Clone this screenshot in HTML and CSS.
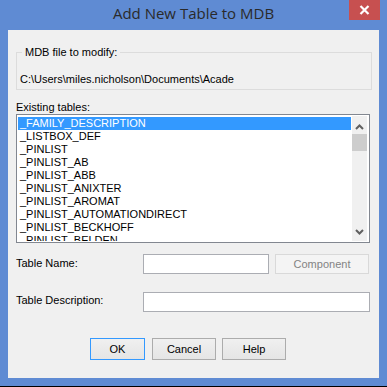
FILE: index.html
```html
<!DOCTYPE html>
<html>
<head>
<meta charset="utf-8">
<link rel="stylesheet" href="styles.css">
</head>
<body>
<div class="window">
  <div class="titlebar">
    <div class="title">Add New Table to MDB</div>
    <div class="close">
      <svg width="31" height="20" viewBox="0 0 31 20"><path d="M11.5 6 L19.5 14 M19.5 6 L11.5 14" stroke="#fff" stroke-width="2.2"/></svg>
    </div>
  </div>
  <div class="client">
    <div class="group">
      <div class="legend">MDB file to modify:</div>
      <div class="path">C:\Users\miles.nicholson\Documents\Acade</div>
    </div>
    <div class="label-top">Existing tables:</div>
    <div class="listbox">
      <div class="items">
        <div class="item selected">_FAMILY_DESCRIPTION</div>
        <div class="item">_LISTBOX_DEF</div>
        <div class="item">_PINLIST</div>
        <div class="item">_PINLIST_AB</div>
        <div class="item">_PINLIST_ABB</div>
        <div class="item">_PINLIST_ANIXTER</div>
        <div class="item">_PINLIST_AROMAT</div>
        <div class="item">_PINLIST_AUTOMATIONDIRECT</div>
        <div class="item">_PINLIST_BECKHOFF</div>
        <div class="item">_PINLIST_BELDEN</div>
      </div>
      <div class="scrollbar">
        <div class="arrow">
          <svg width="15" height="18" viewBox="0 0 15 18"><path d="M4 13 L7.5 9.5 L11 13" fill="none" stroke="#606060" stroke-width="2"/></svg>
        </div>
        <div class="thumb"></div>
        <div class="track"></div>
        <div class="arrow">
          <svg width="15" height="17" viewBox="0 0 15 17"><path d="M4 6 L7.5 9.5 L11 6" fill="none" stroke="#606060" stroke-width="2"/></svg>
        </div>
      </div>
    </div>
    <div class="row row-name">
      <div class="row-label label-name">Table Name:</div>
      <div class="input input-name"></div>
      <div class="btn btn-disabled">Component</div>
    </div>
    <div class="row row-desc">
      <div class="row-label label-desc">Table Description:</div>
      <div class="input input-desc"></div>
    </div>
    <div class="buttons">
      <div class="btn btn-ok">OK</div>
      <div class="btn btn-cancel">Cancel</div>
      <div class="btn btn-help">Help</div>
    </div>
  </div>
</div>
</body>
</html>
```
FILE: styles.css
```css
html, body {
  margin: 0;
  padding: 0;
  background: #000;
}
.window {
  width: 387px;
  height: 386px;
  background: #5f8bd3;
  box-sizing: border-box;
  overflow: hidden;
}
.titlebar {
  height: 30px;
  display: grid;
  grid-template-columns: 1fr auto 1fr;
}
.title {
  grid-column: 2;
  padding-top: 3px;
  font-family: "Open Sans", "Noto Sans", sans-serif;
  font-size: 15px;
  line-height: 20px;
  color: #2a2a2a;
  white-space: nowrap;
}
.close {
  grid-column: 3;
  justify-self: end;
  align-self: start;
  width: 31px;
  height: 20px;
  margin-right: 7px;
  background: #c75050;
}
.close svg { display: block; }
.client {
  margin: 0 8px;
  height: 348px;
  background: #f0f0f0;
  padding: 0 0 0 8px;
  box-sizing: border-box;
  font-family: "Liberation Sans", Arial, sans-serif;
  font-size: 11px;
  line-height: 13px;
  color: #000;
  overflow: hidden;
}
.group {
  margin-top: 22px;
  width: 356px;
  height: 38px;
  border: 1px solid #dcdcdc;
  box-sizing: border-box;
}
.legend {
  display: inline-block;
  margin-top: -7px;
  margin-left: 5px;
  padding: 0 3px;
  background: #f0f0f0;
  vertical-align: top;
}
.path {
  margin-top: 7px;
  padding-left: 3px;
  white-space: nowrap;
}
.label-top {
  margin-top: 11px;
}
.listbox {
  width: 354px;
  height: 129px;
  border: 1px solid #828790;
  box-sizing: border-box;
  background: #fff;
  display: flex;
  padding: 1px 2px 1px 1px;
}
.items {
  width: 333px;
  padding-top: 1px;
  overflow: hidden;
}
.item {
  height: 13px;
  padding-left: 2px;
  white-space: nowrap;
}
.item.selected {
  background: #3399ff;
  color: #fff;
}
.scrollbar {
  width: 15px;
  margin-left: 1px;
  background: #f0f0f0;
  display: flex;
  flex-direction: column;
}
.arrow svg { display: block; }
.thumb {
  height: 17px;
  background: #cdcdcd;
}
.track { flex: 1; }
.row {
  display: flex;
  align-items: flex-start;
}
.row-name { margin-top: 11px; }
.row-desc { margin-top: 18px; }
.row-label {
  width: 127px;
  white-space: nowrap;
}
.label-name { padding-top: 3px; }
.label-desc { padding-top: 2px; }
.input {
  height: 20px;
  box-sizing: border-box;
  border: 1px solid #abadb3;
  background: #fff;
}
.input-name { width: 126px; }
.input-desc { width: 227px; }
.btn {
  box-sizing: border-box;
  border: 1px solid #acacac;
  background: linear-gradient(#f0f0f0, #e5e5e5);
  display: flex;
  align-items: center;
  justify-content: center;
  white-space: nowrap;
}
.btn-disabled {
  width: 94px;
  height: 20px;
  margin-left: 6px;
  border-color: #d9d9d9;
  background: #f4f4f4;
  color: #838383;
}
.buttons {
  display: flex;
  margin-top: 26px;
  padding-left: 74px;
}
.buttons .btn { height: 22px; }
.btn-ok {
  width: 55px;
  border-color: #3399ff;
}
.btn-cancel {
  width: 64px;
  margin-left: 7px;
}
.btn-help {
  width: 64px;
  margin-left: 6px;
}
```
